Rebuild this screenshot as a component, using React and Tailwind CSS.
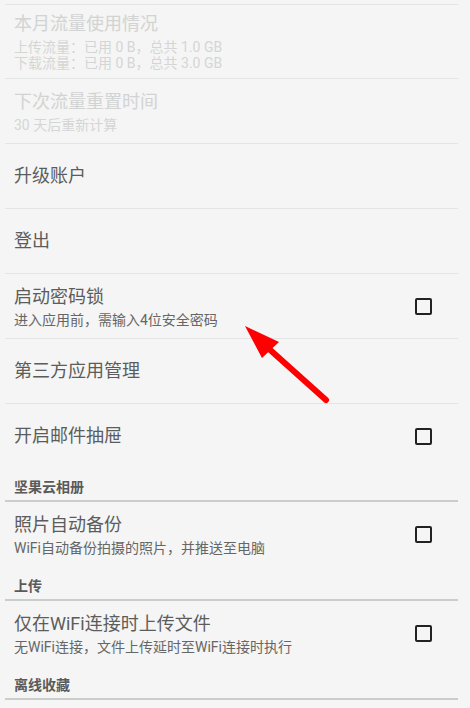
import React from 'react';

const Checkbox = () => (
  <div className="w-[17px] h-[17px] border-2 border-[#222] rounded-[2px] shrink-0" />
);

const Row = ({ title, subs = [], disabled, checkbox, divider = true, height = 'h-[65px]' }) => (
  <div
    className={`flex items-center pl-[9px] pr-[26px] ${height} ${
      divider ? 'border-t border-[#e3e4e4]' : ''
    }`}
  >
    <div className="flex-1 flex flex-col">
      <div
        className={`text-[18px] leading-[24px] ${disabled ? 'text-[#d2d3d3]' : 'text-[#5c5c5c]'}`}
      >
        {title}
      </div>
      {subs.length > 0 && (
        <div className="mt-[3px]">
          {subs.map((s) => (
            <div
              key={s}
              className={`text-[14px] leading-[16px] ${disabled ? 'text-[#d4d5d5]' : 'text-[#666]'}`}
            >
              {s}
            </div>
          ))}
        </div>
      )}
    </div>
    {checkbox && <Checkbox />}
  </div>
);

const Header = ({ label }) => (
  <div className="pl-[9px] pt-[9px] pb-[3px] text-[14px] leading-[20px] font-bold text-[#5a5a5a] border-b-2 border-[#cbcccc]">
    {label}
  </div>
);

export default function App() {
  return (
    <div className="relative w-[470px] min-h-[708px] bg-[#f4f5f4] overflow-hidden font-[Roboto,'Noto_Sans_CJK_SC',sans-serif]">
      <div className="pt-[4px] ml-[5px] mr-[12px]">
        <Row
          title="本月流量使用情况"
          subs={['上传流量：已用 0 B，总共 1.0 GB', '下载流量：已用 0 B，总共 3.0 GB']}
          disabled
          height="h-[74px]"
        />
        <Row title="下次流量重置时间" subs={['30 天后重新计算']} disabled />
        <Row title="升级账户" />
        <Row title="登出" />
        <Row title="启动密码锁" subs={['进入应用前，需输入4位安全密码']} checkbox />
        <Row title="第三方应用管理" />
        <Row title="开启邮件抽屉" checkbox />
        <Header label="坚果云相册" />
        <Row
          title="照片自动备份"
          subs={['WiFi自动备份拍摄的照片，并推送至电脑']}
          checkbox
          divider={false}
        />
        <Header label="上传" />
        <Row
          title="仅在WiFi连接时上传文件"
          subs={['无WiFi连接，文件上传延时至WiFi连接时执行']}
          checkbox
          divider={false}
        />
        <Header label="离线收藏" />
      </div>

      {/* red annotation arrow */}
      <svg
        className="absolute inset-0 pointer-events-none"
        width="470"
        height="708"
        viewBox="0 0 470 708"
      >
        <line x1="268" y1="348" x2="326" y2="400" stroke="#ff0000" strokeWidth="6" strokeLinecap="round" />
        <polygon points="245,326 279,342 262,358" fill="#ff0000" />
      </svg>
    </div>
  );
}
